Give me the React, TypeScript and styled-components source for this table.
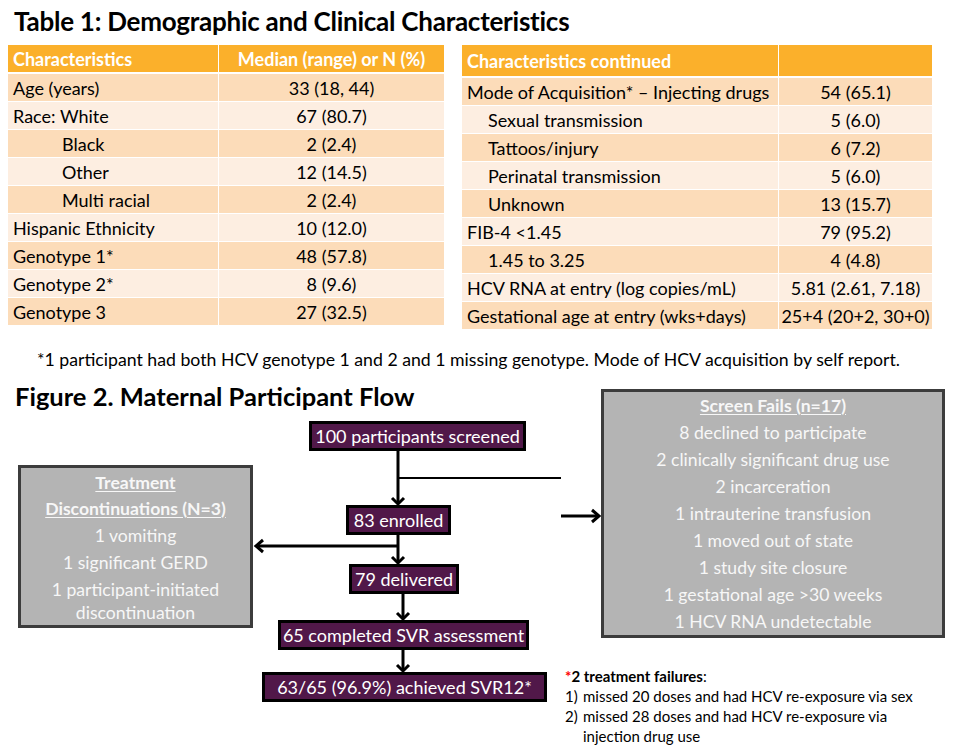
import React from "react";
import styled, { createGlobalStyle } from "styled-components";

const GlobalStyle = createGlobalStyle`
  html, body {
    margin: 0;
    padding: 0;
    background: #ffffff;
  }
  body {
    font-family: Lato, "Open Sans", sans-serif;
    color: #000000;
  }
`;

const Page = styled.div`
  width: 969px;
  height: 748px;
  overflow: hidden;
`;

const Title = styled.h1`
  margin: 0;
  padding: 4px 0 0 14px;
  font-size: 26px;
  letter-spacing: -0.25px;
  font-weight: 700;
  line-height: 34px;
`;

const Tables = styled.div`
  display: flex;
  gap: 18px;
  padding-left: 8px;
  margin-top: 7px;
`;

const Grid = styled.div<{ $cols: string }>`
  display: grid;
  grid-template-columns: ${(p) => p.$cols};
  column-gap: 1px;
  row-gap: 1px;
  align-self: flex-start;
`;

type Tone = "head" | "dark" | "light";

const toneBg: Record<Tone, string> = {
  head: "#fbb02b",
  dark: "#fcdcb9",
  light: "#fdeee1",
};

const Cell = styled.div<{ $tone: Tone; $h: number; $indent?: number; $center?: boolean }>`
  height: ${(p) => p.$h}px;
  background: ${(p) => toneBg[p.$tone]};
  color: ${(p) => (p.$tone === "head" ? "#ffffff" : "#000000")};
  font-weight: ${(p) => (p.$tone === "head" ? 700 : 400)};
  font-size: 18px;
  display: flex;
  align-items: center;
  justify-content: ${(p) => (p.$center ? "center" : "flex-start")};
  padding-left: ${(p) => (p.$center ? 0 : 5 + (p.$indent ?? 0))}px;
  white-space: nowrap;
  margin-bottom: ${(p) => (p.$tone === "head" ? 1 : 0)}px;
`;

type Row = [string, string, number?];

const leftRows: Row[] = [
  ["Age (years)", "33 (18, 44)"],
  ["Race: White", "67 (80.7)"],
  ["Black", "2 (2.4)", 49],
  ["Other", "12 (14.5)", 49],
  ["Multi racial", "2 (2.4)", 49],
  ["Hispanic Ethnicity", "10 (12.0)"],
  ["Genotype 1*", "48 (57.8)"],
  ["Genotype 2*", "8 (9.6)"],
  ["Genotype 3", "27 (32.5)"],
];

const rightRows: Row[] = [
  ["Mode of Acquisition* \u2013 Injecting drugs", "54 (65.1)"],
  ["Sexual transmission", "5 (6.0)", 21],
  ["Tattoos/injury", "6 (7.2)", 21],
  ["Perinatal transmission", "5 (6.0)", 21],
  ["Unknown", "13 (15.7)", 21],
  ["FIB-4 <1.45", "79 (95.2)"],
  ["1.45 to 3.25", "4 (4.8)", 21],
  ["HCV RNA at entry (log copies/mL)", "5.81 (2.61, 7.18)"],
  ["Gestational age at entry (wks+days)", "25+4 (20+2, 30+0)"],
];

function DataTable(props: { cols: string; head: [string, string]; headH: number; rows: Row[] }) {
  const { cols, head, headH, rows } = props;
  return (
    <Grid $cols={cols}>
      <Cell $tone="head" $h={headH}>{head[0]}</Cell>
      <Cell $tone="head" $h={headH} $center>{head[1]}</Cell>
      {rows.map(([label, value, indent], i) => {
        const tone: Tone = i % 2 === 0 ? "dark" : "light";
        return (
          <React.Fragment key={label}>
            <Cell $tone={tone} $h={27} $indent={indent}>{label}</Cell>
            <Cell $tone={tone} $h={27} $center>{value}</Cell>
          </React.Fragment>
        );
      })}
    </Grid>
  );
}

const Footnote = styled.p`
  margin: 0;
  padding: 20px 0 0 37px;
  font-size: 17.7px;
  line-height: 22px;
  white-space: nowrap;
`;

const Figure = styled.section`
  position: relative;
  height: 370px;
  margin-top: 7px;
`;

const FigTitle = styled.h2`
  margin: 0;
  padding: 2px 0 0 15px;
  font-size: 25.5px;
  font-weight: 700;
  line-height: 32px;
`;

const Step = styled.div<{ $x: number; $y: number; $w: number }>`
  position: absolute;
  left: ${(p) => p.$x}px;
  top: ${(p) => p.$y}px;
  width: ${(p) => p.$w}px;
  height: 30px;
  box-sizing: border-box;
  background: #511849;
  border: 3px solid #000000;
  color: #ffffff;
  font-size: 18px;
  display: flex;
  align-items: center;
  justify-content: center;
  white-space: nowrap;
`;

const GrayBox = styled.div<{ $x: number; $y: number; $w: number; $h: number; $pad: number }>`
  position: absolute;
  left: ${(p) => p.$x}px;
  top: ${(p) => p.$y}px;
  width: ${(p) => p.$w}px;
  height: ${(p) => p.$h}px;
  box-sizing: border-box;
  padding-top: ${(p) => p.$pad}px;
  background: #b4b4b4;
  border: 3px solid #3c3c3c;
  color: #f7f7f7;
  font-size: 17.6px;
  text-align: center;
`;

const BoxLine = styled.div<{ $lh: number; $gap: number; $head?: boolean }>`
  line-height: ${(p) => p.$lh}px;
  margin-bottom: ${(p) => p.$gap}px;
  font-weight: ${(p) => (p.$head ? 700 : 400)};
  text-decoration: ${(p) => (p.$head ? "underline" : "none")};
  text-underline-offset: 2px;
`;

const Failures = styled.div`
  position: absolute;
  left: 565px;
  top: 288px;
  font-size: 15px;
  line-height: 20px;
`;

const FailHead = styled.div`
  font-weight: 700;
`;

const Star = styled.span`
  color: #ff0000;
`;

const Plain = styled.span`
  font-weight: 400;
`;

const FailItem = styled.div`
  display: grid;
  grid-template-columns: 18px 338px;
`;

const Wires = styled.svg`
  position: absolute;
  left: 0;
  top: 0;
  overflow: visible;
  pointer-events: none;
`;

// page y minus 378 = canvas y
function Connectors() {
  const s = { stroke: "#000", strokeWidth: 3, fill: "none" } as const;
  const down = (x: number, y: number) => `${x - 6},${y - 7} ${x},${y - 1} ${x + 6},${y - 7}`;
  return (
    <Wires width={969} height={370}>
      <line x1={398} y1={73} x2={398} y2={126} {...s} />
      <polyline points={down(398, 127)} {...s} />
      <line x1={398} y1={100} x2={561} y2={100} stroke="#000" strokeWidth={2} />
      <line x1={561} y1={138} x2={599} y2={138} {...s} />
      <polyline points={`592,132 599,138 592,144`} {...s} />
      <line x1={398} y1={168} x2={256} y2={168} {...s} />
      <polyline points={`263,162 256,168 263,174`} {...s} />
      <line x1={398} y1={157} x2={398} y2={185} {...s} />
      <polyline points={down(398, 186)} {...s} />
      <line x1={403} y1={216} x2={403} y2={241} {...s} />
      <polyline points={down(403, 242)} {...s} />
      <line x1={403} y1={272} x2={403} y2={293} {...s} />
      <polyline points={down(403, 294)} {...s} />
    </Wires>
  );
}

const screenFails = [
  "8 declined to participate",
  "2 clinically significant drug use",
  "2 incarceration",
  "1 intrauterine transfusion",
  "1 moved out of state",
  "1 study site closure",
  "1 gestational age >30 weeks",
  "1 HCV RNA undetectable",
];

export default function App() {
  return (
    <Page>
      <GlobalStyle />
      <Title>Table 1: Demographic and Clinical Characteristics</Title>
      <Tables>
        <DataTable
          cols="210px 225px"
          head={["Characteristics", "Median (range) or N (%)"]}
          headH={27}
          rows={leftRows}
        />
        <DataTable
          cols="316px 153px"
          head={["Characteristics continued", ""]}
          headH={31}
          rows={rightRows}
        />
      </Tables>
      <Footnote>
        *1 participant had both HCV genotype 1 and 2 and 1 missing genotype. Mode of HCV acquisition by self report.
      </Footnote>
      <Figure>
        <FigTitle>Figure 2. Maternal Participant Flow</FigTitle>
        <Connectors />
        <Step $x={309} $y={43} $w={217}>100 participants screened</Step>
        <Step $x={346} $y={127} $w={105}>83 enrolled</Step>
        <Step $x={349} $y={186} $w={110}>79 delivered</Step>
        <Step $x={278} $y={242} $w={251}>65 completed SVR assessment</Step>
        <Step $x={262} $y={294} $w={285}>63/65 (96.9%) achieved SVR12*</Step>
        <GrayBox $x={18} $y={87} $w={235} $h={163} $pad={3}>
          <BoxLine $lh={23} $gap={3} $head>Treatment</BoxLine>
          <BoxLine $lh={23} $gap={4} $head>Discontinuations (N=3)</BoxLine>
          <BoxLine $lh={23} $gap={4}>1 vomiting</BoxLine>
          <BoxLine $lh={23} $gap={4}>1 significant GERD</BoxLine>
          <BoxLine $lh={23} $gap={0}>1 participant-initiated discontinuation</BoxLine>
        </GrayBox>
        <GrayBox $x={601} $y={11} $w={344} $h={249} $pad={0}>
          <BoxLine $lh={27} $gap={0} $head>Screen Fails (n=17)</BoxLine>
          {screenFails.map((t) => (
            <BoxLine key={t} $lh={27} $gap={0}>{t}</BoxLine>
          ))}
        </GrayBox>
        <Failures>
          <FailHead>
            <Star>*</Star>2 treatment failures<Plain>:</Plain>
          </FailHead>
          <FailItem>
            <span>1)</span>
            <span>missed 20 doses and had HCV re-exposure via sex</span>
          </FailItem>
          <FailItem>
            <span>2)</span>
            <span>missed 28 doses and had HCV re-exposure via injection drug use</span>
          </FailItem>
        </Failures>
      </Figure>
    </Page>
  );
}
